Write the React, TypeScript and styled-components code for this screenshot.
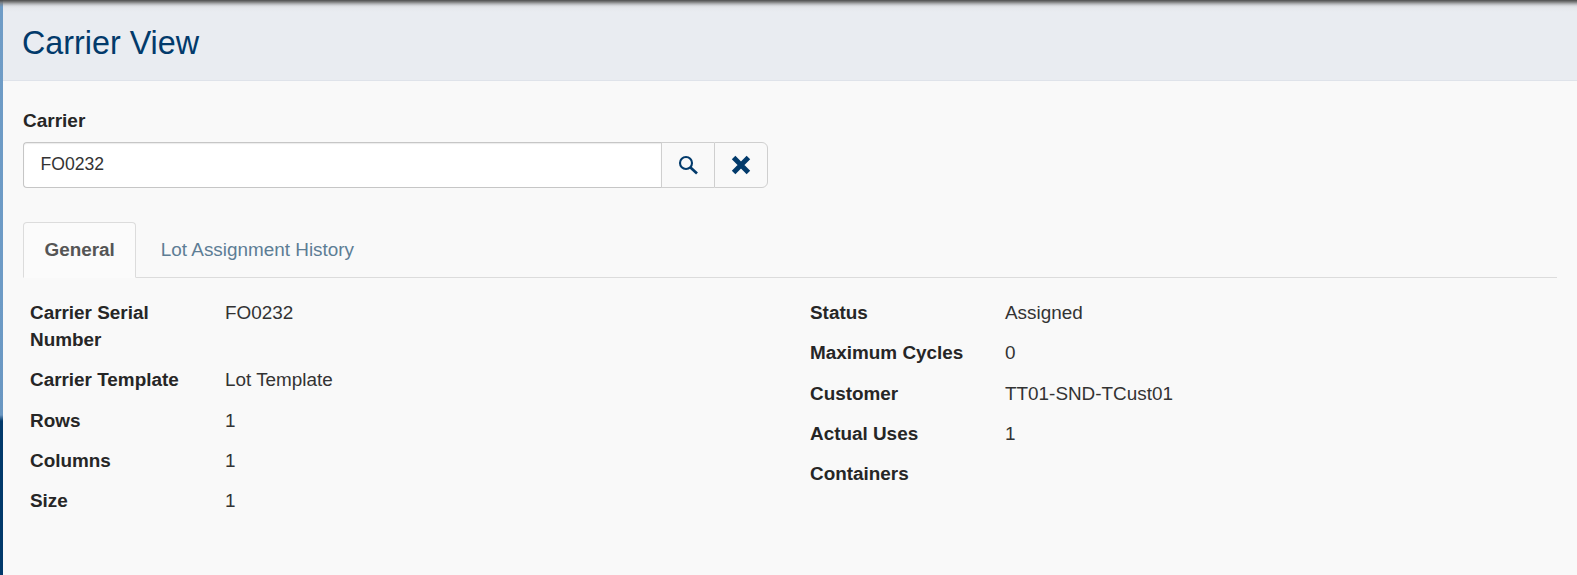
import React from "react";
import styled, { createGlobalStyle } from "styled-components";

const Global = createGlobalStyle`
  html, body { margin: 0; padding: 0; height: 100%; overflow: hidden; }
  body { font-family: "Liberation Sans", Arial, sans-serif; background: #f9f9f9; color: #262626; }
  #root { height: 100%; }
`;

const Page = styled.div`
  display: flex;
  height: 575px;
  width: 1577px;
`;
const Rail = styled.div`
  flex: 0 0 3px;
  background: linear-gradient(180deg, #4a4a4a 0, #7d858e 3px, #6f9cc6 7px, #6d9bc6 300px, #6a97c2 415px, #023a6b 421px, #023a6b 100%);
`;
const Main = styled.main`
  flex: 1;
  min-width: 0;
  display: flex;
  flex-direction: column;
`;
const Header = styled.header`
  height: 81px;
  box-sizing: border-box;
  background: linear-gradient(180deg, #4d4d4d 0, #7d7d7d 2px, #b5b6b9 4px, #dcdee2 6px, #e6e8ec 8px, #e9ecf1 12px);
  border-bottom: 1px solid #dfe3ea;
  display: flex;
  align-items: center;
  padding: 5px 0 0 19px;
`;
const Title = styled.h1`
  margin: 0;
  font-size: 32.3px;
  font-weight: 400;
  color: #023a6b;
  line-height: 44px;
`;
const Content = styled.div`
  padding: 27px 20px 0 20px;
`;
const FieldLabel = styled.label`
  display: block;
  font-size: 19px;
  font-weight: 700;
  line-height: 26px;
  margin-bottom: 8px;
  color: #262626;
`;
const InputGroup = styled.div`
  display: flex;
  width: 745px;
  height: 46px;
  box-sizing: border-box;
`;
const TextInput = styled.input`
  flex: 1;
  min-width: 0;
  box-sizing: border-box;
  height: 46px;
  border: 1px solid #c6c6c6;
  border-right: 0;
  border-radius: 4px 0 0 4px;
  background: #fff;
  box-shadow: inset 0 1px 1px rgba(0, 0, 0, 0.08);
  padding: 0 16.5px 2px;
  font: 17.6px "Liberation Sans", Arial, sans-serif;
  color: #333;
  outline: none;
`;
const IconButton = styled.button<{ $last?: boolean; $w: number }>`
  flex: 0 0 ${(p) => p.$w}px;
  height: 46px;
  display: flex;
  align-items: center;
  justify-content: center;
  padding: 0;
  background: #f9f9f9;
  border: 1px solid #cfcfcf;
  border-right: ${(p) => (p.$last ? "1px solid #cfcfcf" : "0")};
  border-radius: ${(p) => (p.$last ? "0 6px 6px 0" : "0")};
  color: #023a6b;
`;
const Tabs = styled.div`
  display: flex;
  margin-top: 34px;
  height: 56px;
  box-sizing: border-box;
  border-bottom: 1px solid #dcdcdc;
`;
const Tab = styled.div<{ $active?: boolean }>`
  height: 56px;
  box-sizing: border-box;
  padding: 0 ${(p) => (p.$active ? "20.5px" : "23.5px")};
  display: flex;
  align-items: center;
  font-size: 18.9px;
  font-weight: ${(p) => (p.$active ? 700 : 400)};
  color: ${(p) => (p.$active ? "#555" : "#5d7d95")};
  background: ${(p) => (p.$active ? "#fbfbfb" : "transparent")};
  border: 1px solid ${(p) => (p.$active ? "#dcdcdc" : "transparent")};
  border-bottom: ${(p) => (p.$active ? "1px solid #fbfbfb" : "1px solid transparent")};
  border-radius: 4px 4px 0 0;
`;
const Details = styled.div`
  display: grid;
  grid-template-columns: 780px 1fr;
  padding: 21px 0 0 7px;
`;
const Column = styled.dl`
  margin: 0;
  display: flex;
  flex-direction: column;
  gap: 13.3px;
`;
const Row = styled.div`
  display: grid;
  grid-template-columns: 170px 1fr;
  column-gap: 25px;
  font-size: 18.9px;
  line-height: 27px;
`;
const Term = styled.dt`
  font-weight: 700;
  color: #262626;
`;
const Value = styled.dd`
  margin: 0;
  color: #333;
`;

const left: [string, string][] = [
  ["Carrier Serial Number", "FO0232"],
  ["Carrier Template", "Lot Template"],
  ["Rows", "1"],
  ["Columns", "1"],
  ["Size", "1"],
];
const right: [string, string][] = [
  ["Status", "Assigned"],
  ["Maximum Cycles", "0"],
  ["Customer", "TT01-SND-TCust01"],
  ["Actual Uses", "1"],
  ["Containers", ""],
];

const SearchIcon = () => (
  <svg width="20" height="20" viewBox="0 0 20 20" fill="none" stroke="currentColor" aria-hidden="true">
    <circle cx="8" cy="8" r="6" strokeWidth="2.1" />
    <path d="M12.5 12.5 L19 18.6" strokeWidth="2.7" />
  </svg>
);
const CloseIcon = () => (
  <svg width="20" height="20" viewBox="0 0 20 20" fill="none" stroke="currentColor" aria-hidden="true">
    <path d="M2.6 2.6 L17.4 17.4 M17.4 2.6 L2.6 17.4" strokeWidth="5" />
  </svg>
);

const DetailColumn = ({ rows }: { rows: [string, string][] }) => (
  <Column>
    {rows.map(([k, v]) => (
      <Row key={k}>
        <Term>{k}</Term>
        <Value>{v}</Value>
      </Row>
    ))}
  </Column>
);

export default function App() {
  return (
    <Page>
      <Global />
      <Rail />
      <Main>
        <Header>
          <Title>Carrier View</Title>
        </Header>
        <Content>
          <FieldLabel>Carrier</FieldLabel>
          <InputGroup>
            <TextInput defaultValue="FO0232" />
            <IconButton $w={53}>
              <SearchIcon />
            </IconButton>
            <IconButton $w={54} $last>
              <CloseIcon />
            </IconButton>
          </InputGroup>
          <Tabs>
            <Tab $active>General</Tab>
            <Tab>Lot Assignment History</Tab>
          </Tabs>
          <Details>
            <DetailColumn rows={left} />
            <DetailColumn rows={right} />
          </Details>
        </Content>
      </Main>
    </Page>
  );
}
